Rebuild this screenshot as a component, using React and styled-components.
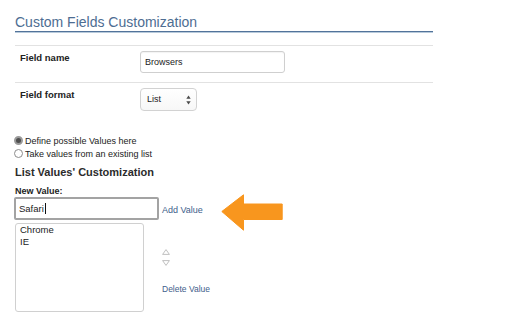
import React from "react";
import styled, { createGlobalStyle } from "styled-components";

const Global = createGlobalStyle`
  html, body { margin: 0; padding: 0; background: #ffffff; }
  body { font-family: "Liberation Sans", Arial, Helvetica, sans-serif; color: #222; }
`;

const Page = styled.div`
  padding: 14px 0 0 15px;
  width: 418px;
  position: relative;
`;

const Title = styled.h1`
  margin: 0;
  font-size: 14px;
  line-height: 16px;
  font-weight: normal;
  color: #4d6d92;
  padding-bottom: 1px;
  border-bottom: 1px solid #52739a;
  box-shadow: 0 1px 0 #b8cadb;
`;

const FieldTable = styled.div`
  margin-top: 13px;
`;

const FieldRow = styled.div`
  display: grid;
  grid-template-columns: 125px 1fr;
  align-items: start;
  border-top: ${(p) => (p.$lined ? "1px solid #e2e2e2" : "none")};
  padding: 5px 0 ${(p) => p.$pb}px;
`;

const FieldLabel = styled.div`
  padding-left: 5px;
  margin-top: 1px;
  font-size: 9.5px;
  line-height: 12px;
  font-weight: bold;
  color: #222;
`;

const TextBox = styled.div`
  box-sizing: border-box;
  width: 145px;
  height: 22px;
  border: 1px solid #cfcfcf;
  border-radius: 3px;
  padding-left: 4px;
  font-size: 9px;
  line-height: 20px;
  color: #222;
  box-shadow: inset 0 1px 1px rgba(0, 0, 0, 0.05);
`;

const SelectBox = styled.div`
  box-sizing: border-box;
  position: relative;
  width: 57px;
  height: 23px;
  border: 1px solid #d2d2d2;
  border-radius: 4px;
  padding-left: 6px;
  font-size: 9px;
  line-height: 21px;
  color: #222;
  background: linear-gradient(#ffffff, #f7f7f7);
`;

const SelectArrows = styled.svg`
  position: absolute;
  right: 5px;
  top: 6px;
`;

const RadioGroup = styled.div`
  margin-top: 23px;
`;

const RadioLine = styled.label`
  display: flex;
  align-items: center;
  height: 13px;
  font-size: 9px;
  color: #222;
`;

const RadioDot = styled.span`
  box-sizing: border-box;
  width: 9px;
  height: 9px;
  margin: 0 2px 0 -1px;
  border-radius: 50%;
  border: ${(p) => (p.$checked ? "2.5px solid #9b9b9b" : "1px solid #8d8d8d")};
  background: ${(p) => (p.$checked ? "#4f4f4f" : "#ffffff")};
`;

const Heading = styled.h2`
  margin: 5px 0 0;
  font-size: 11px;
  line-height: 14px;
  font-weight: bold;
  color: #2b2b2b;
`;

const SubLabel = styled.div`
  margin-top: 7px;
  font-size: 9px;
  line-height: 11px;
  font-weight: bold;
  color: #222;
`;

const AddRow = styled.div`
  position: relative;
  display: flex;
  align-items: center;
  gap: 3px;
  margin: 0 0 0 -1px;
`;

const ValueInput = styled.div`
  box-sizing: border-box;
  display: flex;
  align-items: center;
  width: 145px;
  height: 23px;
  border: 2px solid #a3a3a3;
  border-radius: 2px;
  padding-left: 3px;
  font-size: 9.5px;
  color: #222;
`;

const Caret = styled.span`
  display: inline-block;
  width: 1px;
  height: 11px;
  margin-left: 1px;
  background: #111;
`;

const LinkText = styled.a`
  font-size: ${(p) => p.$size || 9}px;
  line-height: 11px;
  margin-top: ${(p) => p.$mt || 0}px;
  color: #41608b;
  text-decoration: none;
  cursor: pointer;
`;

const Annotation = styled.svg`
  position: absolute;
  left: 207px;
  top: -3px;
`;

const ListRow = styled.div`
  display: flex;
  align-items: flex-start;
  margin-top: 3px;
`;

const ListBox = styled.div`
  box-sizing: border-box;
  width: 129px;
  height: 89px;
  border: 1px solid #d0d0d0;
  border-radius: 3px;
  padding: 0 0 0 4px;
  font-size: 9.5px;
  line-height: 12px;
  color: #222;
`;

const Controls = styled.div`
  display: flex;
  flex-direction: column;
  align-items: flex-start;
  margin-left: 18px;
  padding-top: 26px;
`;

const Mover = styled.svg`
  display: block;
  margin-top: ${(p) => p.$mt || 0}px;
`;

const DeleteWrap = styled.div`
  margin-top: 12px;
`;

export default function App() {
  return (
    <>
      <Global />
      <Page>
        <Title>Custom Fields Customization</Title>
        <FieldTable>
          <FieldRow $lined $pb={9}>
            <FieldLabel>Field name</FieldLabel>
            <TextBox>Browsers</TextBox>
          </FieldRow>
          <FieldRow $lined $pb={0}>
            <FieldLabel>Field format</FieldLabel>
            <SelectBox>
              List
              <SelectArrows width="5" height="10" viewBox="0 0 5 10">
                <polygon points="2.5,0.5 4.7,3.8 0.3,3.8" fill="#4a4a4a" />
                <polygon points="0.3,6.2 4.7,6.2 2.5,9.5" fill="#4a4a4a" />
              </SelectArrows>
            </SelectBox>
          </FieldRow>
        </FieldTable>

        <RadioGroup>
          <RadioLine>
            <RadioDot $checked />
            Define possible Values here
          </RadioLine>
          <RadioLine>
            <RadioDot />
            Take values from an existing list
          </RadioLine>
        </RadioGroup>

        <Heading>List Values' Customization</Heading>
        <SubLabel>New Value:</SubLabel>
        <AddRow>
          <ValueInput>
            Safari
            <Caret />
          </ValueInput>
          <LinkText $mt={3}>Add Value</LinkText>
          <Annotation width="62" height="37" viewBox="0 0 62 37">
            <polygon
              points="0.8,17.5 22.5,0.8 22.5,10 61.2,10 61.2,25.5 22.5,25.5 22.5,36.2"
              fill="#f8961e"
              stroke="#f8961e"
              strokeWidth="1"
              strokeLinejoin="round"
            />
          </Annotation>
        </AddRow>
        <ListRow>
          <ListBox>
            <div>Chrome</div>
            <div>IE</div>
          </ListBox>
          <Controls>
            <Mover width="8" height="6" viewBox="0 0 8 6">
              <polygon points="4,0.6 7.4,5.4 0.6,5.4" fill="none" stroke="#b9b9b9" strokeWidth="0.9" />
            </Mover>
            <Mover $mt={5} width="8" height="6" viewBox="0 0 8 6">
              <polygon points="0.6,0.6 7.4,0.6 4,5.4" fill="none" stroke="#b9b9b9" strokeWidth="0.9" />
            </Mover>
            <DeleteWrap>
              <LinkText $size={8.5}>Delete Value</LinkText>
            </DeleteWrap>
          </Controls>
        </ListRow>
      </Page>
    </>
  );
}
